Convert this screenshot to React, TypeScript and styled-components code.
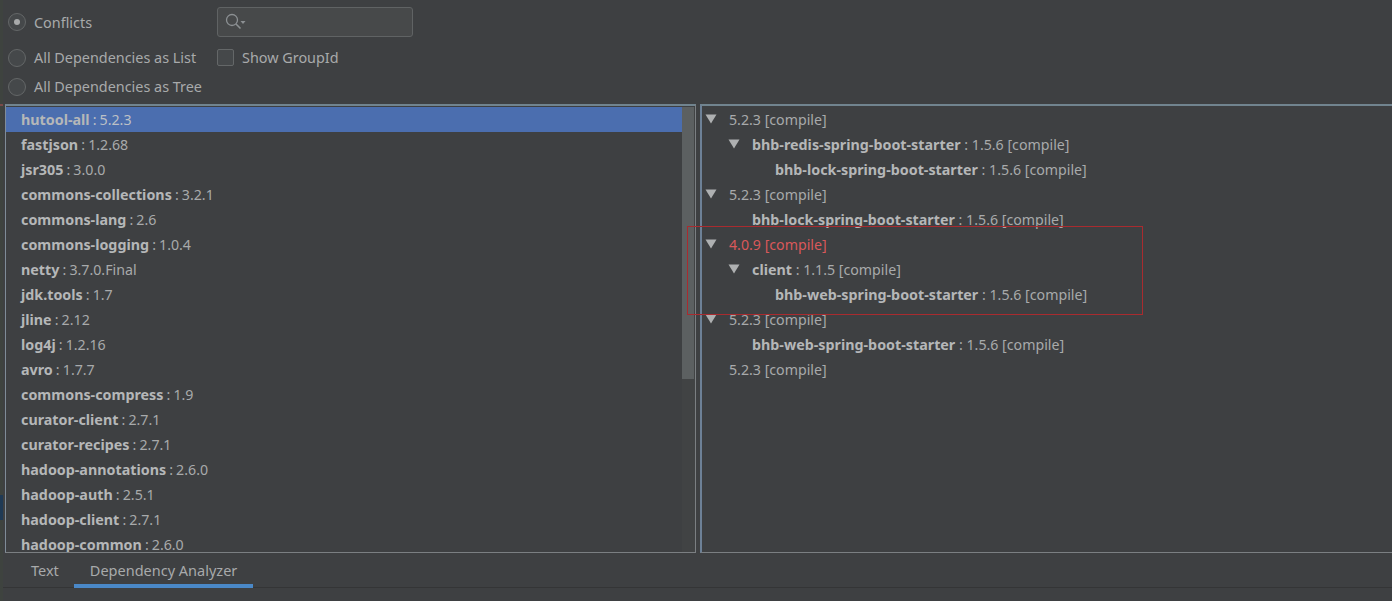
import React from "react";
import styled, { createGlobalStyle } from "styled-components";

const GlobalStyle = createGlobalStyle`
	html, body {
		margin: 0;
		padding: 0;
		background: #3e4042;
		overflow: hidden;
	}
	* {
		box-sizing: border-box;
	}
`;

const DEPENDENCIES = [
	["hutool-all", "5.2.3"],
	["fastjson", "1.2.68"],
	["jsr305", "3.0.0"],
	["commons-collections", "3.2.1"],
	["commons-lang", "2.6"],
	["commons-logging", "1.0.4"],
	["netty", "3.7.0.Final"],
	["jdk.tools", "1.7"],
	["jline", "2.12"],
	["log4j", "1.2.16"],
	["avro", "1.7.7"],
	["commons-compress", "1.9"],
	["curator-client", "2.7.1"],
	["curator-recipes", "2.7.1"],
	["hadoop-annotations", "2.6.0"],
	["hadoop-auth", "2.5.1"],
	["hadoop-client", "2.7.1"],
	["hadoop-common", "2.6.0"],
];

type TreeRow = {
	level: number;
	open?: boolean;
	name?: string;
	version: string;
	conflict?: boolean;
};

const TREE: TreeRow[] = [
	{ level: 0, open: true, version: "5.2.3 [compile]" },
	{ level: 1, open: true, name: "bhb-redis-spring-boot-starter", version: "1.5.6 [compile]" },
	{ level: 2, name: "bhb-lock-spring-boot-starter", version: "1.5.6 [compile]" },
	{ level: 0, open: true, version: "5.2.3 [compile]" },
	{ level: 1, name: "bhb-lock-spring-boot-starter", version: "1.5.6 [compile]" },
	{ level: 0, open: true, version: "4.0.9 [compile]", conflict: true },
	{ level: 1, open: true, name: "client", version: "1.1.5 [compile]" },
	{ level: 2, name: "bhb-web-spring-boot-starter", version: "1.5.6 [compile]" },
	{ level: 0, open: true, version: "5.2.3 [compile]" },
	{ level: 1, name: "bhb-web-spring-boot-starter", version: "1.5.6 [compile]" },
	{ level: 0, version: "5.2.3 [compile]" },
];

const Page = styled.div`
	position: relative;
	width: 1392px;
	height: 601px;
	overflow: hidden;
	display: flex;
	flex-direction: column;
	background: #3e4042;
	color: #a8aaab;
	font-family: "Noto Sans", "Open Sans", sans-serif;
	font-size: 14.2px;
`;

const Options = styled.div`
	height: 104px;
	padding: 7px 0 0 8px;
	font-size: 14.4px;
`;

const OptionGrid = styled.div<{ $first?: boolean }>`
	display: grid;
	grid-template-columns: 209px 196px;
	grid-auto-rows: ${(p) => (p.$first ? "30px" : "29px")};
	margin-top: ${(p) => (p.$first ? "0" : "6px")};
	align-items: center;
`;

const RadioRow = styled.label`
	display: flex;
	align-items: center;
	gap: 8px;
	grid-column: 1;
`;

const RadioCircle = styled.span<{ $checked?: boolean }>`
	width: 18px;
	height: 18px;
	border-radius: 50%;
	border: 1px solid #646768;
	background: #45484a;
	display: flex;
	align-items: center;
	justify-content: center;
	&::after {
		content: "";
		display: ${(p) => (p.$checked ? "block" : "none")};
		width: 6px;
		height: 6px;
		border-radius: 50%;
		background: #a8aaab;
	}
`;

const SearchBox = styled.div`
	grid-column: 2;
	height: 30px;
	border: 1px solid #606364;
	border-radius: 3px;
	background: #47494a;
	display: flex;
	align-items: center;
	padding-left: 7px;
`;

const CheckRow = styled.label`
	grid-column: 2;
	display: flex;
	align-items: center;
	gap: 8px;
`;

const CheckBox = styled.span`
	width: 17px;
	height: 17px;
	border: 1px solid #646768;
	border-radius: 2px;
	background: #45484a;
`;

const Panels = styled.div`
	height: 449px;
	display: grid;
	grid-template-columns: 691px 692px;
	column-gap: 4px;
	padding-left: 5px;
`;

const Panel = styled.div<{ $accent?: boolean }>`
	position: relative;
	overflow: hidden;
	border: 1px solid #7b7f82;
	border-left: ${(p) => (p.$accent ? "2px solid #6d8197" : "1px solid #7f8c98")};
	border-top: 2px solid #71848f;
	border-right: ${(p) => (p.$accent ? "none" : "1px solid #7b7f82")};
	padding-top: 1px;
	display: flex;
	flex-direction: column;
`;

const ListRow = styled.div<{ $selected?: boolean }>`
	flex: none;
	height: 25px;
	line-height: 25px;
	padding-left: 15px;
	white-space: nowrap;
	word-spacing: -0.6px;
	margin-right: 13px;
	color: ${(p) => (p.$selected ? "#bcc0c6" : "#a8aaab")};
	background: ${(p) => (p.$selected ? "#4b6eaf" : "transparent")};
`;

const Name = styled.b`
	font-weight: 700;
	font-size: 14.3px;
	color: #b5b7b8;
`;

const ScrollTrack = styled.div`
	position: absolute;
	top: 1px;
	right: 0;
	bottom: 0;
	width: 13px;
	background: #414344;
`;

const ScrollThumb = styled.div`
	width: 12px;
	height: 272px;
	background: #5c6061;
`;

const TreeLine = styled.div<{ $level: number; $conflict?: boolean }>`
	flex: none;
	height: 25px;
	display: flex;
	align-items: center;
	padding-left: ${(p) => 3 + p.$level * 23}px;
	white-space: nowrap;
	color: ${(p) => (p.$conflict ? "#d9585a" : "#a8aaab")};
`;

const Arrow = styled.span<{ $hidden: boolean }>`
	width: 22px;
	height: 25px;
	flex: none;
	display: flex;
	align-items: center;
	padding-bottom: 2px;
	visibility: ${(p) => (p.$hidden ? "hidden" : "visible")};
`;

const TreeText = styled.span`
	margin-left: 2px;
`;

const Marker = styled.div`
	position: absolute;
	left: 687px;
	top: 226px;
	width: 456px;
	height: 89px;
	border: 1px solid #a92b2f;
	pointer-events: none;
`;

const TabBar = styled.div`
	height: 35px;
	display: flex;
	padding-left: 5px;
	border-bottom: 1px solid #343536;
	font-size: 14.5px;
`;

const Tab = styled.div<{ $active?: boolean }>`
	height: 35px;
	line-height: 35px;
	padding: ${(p) => (p.$active ? "0 16px" : "0 15px 0 26px")};
	border-bottom: ${(p) => (p.$active ? "4px solid #4a88c7" : "none")};
`;

const EdgeStrip = styled.div`
	position: absolute;
	left: 0;
	top: 0;
	bottom: 0;
	width: 3px;
	background: #3e433f;
`;

const EdgePatch = styled.div<{ $top: number; $height: number; $color: string }>`
	position: absolute;
	left: 0;
	top: ${(p) => p.$top}px;
	width: 3px;
	height: ${(p) => p.$height}px;
	background: ${(p) => p.$color};
`;

const SearchIcon = () => (
	<svg width="24" height="18" viewBox="0 0 24 18" fill="none">
		<circle cx="7" cy="7" r="5.5" stroke="#8c9093" strokeWidth="1.3" />
		<path d="M11 11l4.5 4.5" stroke="#8c9093" strokeWidth="1.6" />
		<path d="M15.5 8h5l-2.5 3z" fill="#8c9093" />
	</svg>
);

const TriangleIcon = () => (
	<svg width="12" height="10" viewBox="0 0 12 10">
		<path d="M0.5 0.5h11L6 9.5z" fill="#aeb0b1" />
	</svg>
);

const App: React.FC = () => {
	return (
		<Page>
			<GlobalStyle />
			<EdgeStrip />
			<EdgePatch $top={104} $height={2} $color="#7a4a4a" />
			<EdgePatch $top={495} $height={25} $color="#1f3a55" />
			<Options>
				<OptionGrid $first>
					<RadioRow>
						<RadioCircle $checked />
						Conflicts
					</RadioRow>
					<SearchBox>
						<SearchIcon />
					</SearchBox>
				</OptionGrid>
				<OptionGrid>
					<RadioRow>
						<RadioCircle />
						All Dependencies as List
					</RadioRow>
					<CheckRow>
						<CheckBox />
						Show GroupId
					</CheckRow>
					<RadioRow>
						<RadioCircle />
						All Dependencies as Tree
					</RadioRow>
				</OptionGrid>
			</Options>
			<Panels>
				<Panel>
					{DEPENDENCIES.map(([name, version], index) => (
						<ListRow key={name} $selected={index === 0}>
							<Name>{name}</Name> : {version}
						</ListRow>
					))}
					<ScrollTrack>
						<ScrollThumb />
					</ScrollTrack>
				</Panel>
				<Panel $accent>
					{TREE.map((row, index) => (
						<TreeLine key={index} $level={row.level} $conflict={row.conflict}>
							<Arrow $hidden={!row.open}>
								<TriangleIcon />
							</Arrow>
							<TreeText>
								{row.name && (
									<>
										<Name>{row.name}</Name> :{" "}
									</>
								)}
								{row.version}
							</TreeText>
						</TreeLine>
					))}
				</Panel>
			</Panels>
			<TabBar>
				<Tab>Text</Tab>
				<Tab $active>Dependency Analyzer</Tab>
			</TabBar>
			<Marker />
		</Page>
	);
};

export default App;
